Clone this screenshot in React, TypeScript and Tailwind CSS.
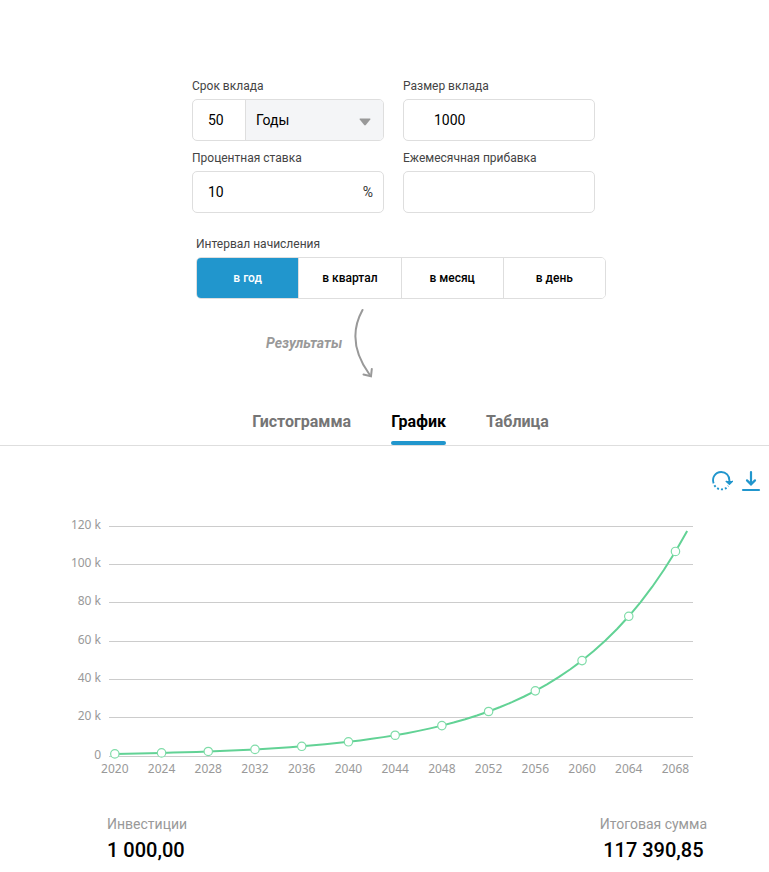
import { useState } from "react";

const intervals = ["в год", "в квартал", "в месяц", "в день"];
const tabs = ["Гистограмма", "График", "Таблица"];

const fieldBox = "flex h-[42px] overflow-hidden rounded-[5px] border border-[#dedede] bg-white";
const labelText = "mb-[5px] block text-xs leading-4 text-[#444]";

// plot area in viewBox units
const LEFT = 109;
const RIGHT = 693;
const BASE = 264;
const HEIGHT = 230;
const STEP = (RIGHT - LEFT) / 50;

const points = Array.from({ length: 50 }, (_, i) => ({
  year: 2020 + i,
  x: LEFT + STEP * (i + 0.5),
  y: BASE - (Math.pow(1.1, i + 1) / 120) * HEIGHT,
}));

function GrowthChart() {
  const line = points.map((p) => `${p.x.toFixed(2)},${p.y.toFixed(2)}`).join(" ");
  const marks = points.filter((_, i) => i % 4 === 0);

  return (
    <svg
      viewBox="0 0 769 300"
      className="block w-full font-['Noto_Sans',sans-serif] text-xs"
      role="img"
      aria-label="График"
    >
      {[0, 20, 40, 60, 80, 100, 120].map((v) => {
        const y = Math.floor(BASE - (v / 120) * HEIGHT) + 0.5;
        return (
          <g key={v}>
            <line x1={LEFT} x2={RIGHT} y1={y} y2={y} stroke="#ccc" />
            <text x="101" y={y + 2.5} textAnchor="end" fill="#999">
              {v === 0 ? "0" : `${v} k`}
            </text>
          </g>
        );
      })}
      <polyline points={line} fill="none" stroke="#62d295" strokeWidth="2" strokeLinejoin="round" />
      {marks.map((p) => (
        <g key={p.year}>
          <circle cx={p.x} cy={p.y} r="4.2" fill="#fff" stroke="#7fdca8" strokeWidth="1.2" />
          <text x={p.x} y="281" textAnchor="middle" fill="#999">
            {p.year}
          </text>
        </g>
      ))}
    </svg>
  );
}

export default function App() {
  const [interval, setInterval] = useState("в год");
  const [tab, setTab] = useState("График");

  return (
    <div className="min-h-screen bg-white pb-2 font-[Roboto,sans-serif] text-black">
      <div className="pt-[78px] pl-8">
        <form className="mx-auto max-w-[417px]">
          <div className="grid grid-cols-2 gap-x-[19px] gap-y-[9px] pr-[14px]">
            <div>
              <label htmlFor="term" className={labelText}>Срок вклада</label>
              <div className={fieldBox}>
                <input id="term" defaultValue="50" className="w-[52px] pl-[15px] text-sm outline-none" />
                <div className="relative flex-1 border-l border-[#dedede] bg-[#f4f5f7]">
                  <select aria-label="Единица срока" className="h-full w-full appearance-none pl-[10px] text-sm outline-none">
                    <option>Годы</option>
                  </select>
                  <svg viewBox="0 0 12 8" className="pointer-events-none absolute top-[18px] right-3 h-2 w-3" fill="#999">
                    <path d="M1.2 0.5h9.6q1 0 .5.9L6.8 7.1q-.8.9-1.6 0L.7 1.4Q.2.5 1.2.5z" />
                  </svg>
                </div>
              </div>
            </div>
            <div>
              <label htmlFor="amount" className={labelText}>Размер вклада</label>
              <div className={fieldBox}>
                <input id="amount" defaultValue="1000" className="w-full pl-[30px] text-sm outline-none" />
              </div>
            </div>
            <div>
              <label htmlFor="rate" className={labelText}>Процентная ставка</label>
              <div className={fieldBox}>
                <input id="rate" defaultValue="10" className="min-w-0 flex-1 pl-[15px] text-sm outline-none" />
                <span className="self-center pr-[10px] text-sm text-[#333]">%</span>
              </div>
            </div>
            <div>
              <label htmlFor="monthly" className={labelText}>Ежемесячная прибавка</label>
              <div className={fieldBox}>
                <input id="monthly" className="w-full pl-[30px] text-sm outline-none" />
              </div>
            </div>
          </div>

          <div className="mt-[23px] pr-[3px] pl-1" role="group" aria-labelledby="interval-label">
            <span id="interval-label" className={labelText}>Интервал начисления</span>
            <div className={fieldBox}>
              {intervals.map((name) => (
                <button
                  key={name}
                  type="button"
                  onClick={() => setInterval(name)}
                  className={`flex-1 border-l border-[#dedede] text-xs font-medium first:border-l-0 ${
                    interval === name ? "bg-[#2196cd] text-white" : "bg-white"
                  }`}
                >
                  {name}
                </button>
              ))}
            </div>
          </div>
        </form>

        <div className="mx-auto flex h-[110px] max-w-[417px] items-start pt-[9px] pl-[74px]">
          <span className="mt-[25px] text-sm font-bold text-[#999] italic">Результаты</span>
          <svg viewBox="0 0 24 70" className="ml-[11px] h-[70px] w-6" fill="none" stroke="#999" strokeWidth="2" strokeLinecap="round">
            <path d="M9.5 2C-1 21-.5 43 16.5 66.5" />
            <path d="M10.5 66.5l7.5 1.7.8-7.2" />
          </svg>
        </div>
      </div>

      <div className="flex justify-center gap-10 border-b border-[#dedede] pl-8" role="tablist">
        {tabs.map((name) => (
          <button
            key={name}
            role="tab"
            aria-selected={tab === name}
            onClick={() => setTab(name)}
            className={`pt-px text-base font-bold ${tab === name ? "text-black" : "text-[#757575]"}`}
          >
            {name}
            <span className={`mt-[7px] block h-1 rounded-sm ${tab === name ? "bg-[#2196cd]" : ""}`} />
          </button>
        ))}
      </div>

      <div className="flex justify-end gap-2 pt-6 pr-2 text-[#2196cd]">
        <button aria-label="Обновить">
          <svg viewBox="0 0 22 22" className="h-[22px] w-[22px]" fill="none" stroke="currentColor" strokeWidth="1.9">
            <path d="M2.6 13.4C.6 7.5 4.4 2 10.2 2c4.8 0 8.2 3.7 8.2 8.4v2.4" />
            <path d="M3.4 15.2C6.4 20.6 14 20.8 17.2 15.8" strokeDasharray="2 2" />
            <path d="M14.8 10.9l3.6 3.4 3.6-3.4" fill="currentColor" strokeWidth="1.4" strokeLinejoin="round" />
          </svg>
        </button>
        <button aria-label="Скачать">
          <svg viewBox="0 0 20 22" className="h-[22px] w-5" fill="none" stroke="currentColor" strokeWidth="2.2" strokeLinecap="round">
            <path d="M10 2v12M6 10.4l4 4 4-4" />
            <path d="M2 20h16" />
          </svg>
        </button>
      </div>

      <GrowthChart />

      <div className="mt-[22px] flex justify-between pr-[62px] pl-[107px]">
        <div>
          <div className="text-sm text-[#999]">Инвестиции</div>
          <div className="mt-1 text-xl leading-6 font-medium">1 000,00</div>
        </div>
        <div className="text-center">
          <div className="text-sm text-[#999]">Итоговая сумма</div>
          <div className="mt-1 text-xl leading-6 font-medium">117 390,85</div>
        </div>
      </div>
    </div>
  );
}
